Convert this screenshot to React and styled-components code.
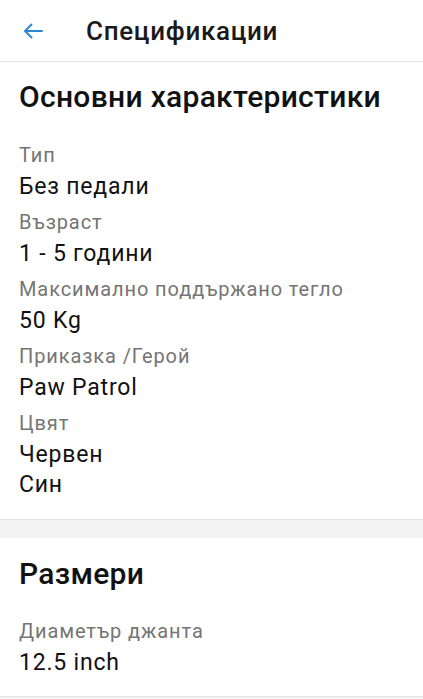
import React from "react";
import styled, { createGlobalStyle } from "styled-components";

const Global = createGlobalStyle`
  html, body { margin: 0; padding: 0; background: #fff; }
  body { font-family: Roboto, "Noto Sans", "Liberation Sans", sans-serif; color: #000; }
`;

const Page = styled.div`
  display: flex;
  flex-direction: column;
  width: 423px;
  height: 699px;
  overflow: hidden;
  background: #fff;
`;

const TopBar = styled.header`
  display: flex;
  align-items: center;
  height: 62px;
  flex-shrink: 0;
  border-bottom: 1px solid #e6e6e6;
  box-shadow: 0 1px 2px rgba(0, 0, 0, 0.04);
  box-sizing: border-box;
`;

const BackButton = styled.button`
  display: flex;
  align-items: center;
  justify-content: center;
  width: 66px;
  height: 100%;
  padding: 0;
  margin: 0 20px 0 0;
  border: none;
  background: none;
  color: #2b87d4;
`;

const Title = styled.h1`
  margin: 0;
  font-size: 26px;
  font-weight: 500;
  letter-spacing: 0.7px;
  line-height: 30px;
  color: #1a1a1a;
`;

const Section = styled.section`
  display: flex;
  flex-direction: column;
  padding: ${(p) => p.$top}px 19px ${(p) => p.$bottom}px;
`;

const Heading = styled.h2`
  margin: 0 0 ${(p) => p.$gap}px;
  font-size: 30px;
  font-weight: 500;
  letter-spacing: 0.3px;
  line-height: 36px;
  color: #111;
`;

const List = styled.dl`
  display: flex;
  flex-direction: column;
  gap: 6px;
  margin: 0;
`;

const Row = styled.div`
  display: flex;
  flex-direction: column;
  gap: 3px;
`;

const Label = styled.dt`
  font-size: 20px;
  letter-spacing: 0.9px;
  line-height: 28px;
  color: #757575;
`;

const Value = styled.dd`
  margin: 0;
  font-size: 23px;
  letter-spacing: 0.8px;
  line-height: 30px;
  color: #111;
`;

const Divider = styled.div`
  height: 18px;
  flex-shrink: 0;
  background: #f4f4f4;
  border-top: 1px solid #e3e3e3;
`;

const BackArrow = () => (
  <svg width="20" height="16" viewBox="0 0 20 16" fill="none">
    <path
      d="M19 8H2M8.5 1.5L2 8l6.5 6.5"
      stroke="currentColor"
      strokeWidth="2"
      strokeLinecap="round"
      strokeLinejoin="round"
    />
  </svg>
);

const basic = [
  { label: "Тип", values: ["Без педали"] },
  { label: "Възраст", values: ["1 - 5 години"] },
  { label: "Максимално поддържано тегло", values: ["50 Kg"] },
  { label: "Приказка /Герой", values: ["Paw Patrol"] },
  { label: "Цвят", values: ["Червен", "Син"] },
];

const sizes = [{ label: "Диаметър джанта", values: ["12.5 inch"] }];

const Specs = ({ items }) => (
  <List>
    {items.map((it) => (
      <Row key={it.label}>
        <Label>{it.label}</Label>
        <Value>
          {it.values.map((v) => (
            <div key={v}>{v}</div>
          ))}
        </Value>
      </Row>
    ))}
  </List>
);

export default function App() {
  return (
    <Page>
      <Global />
      <TopBar>
        <BackButton aria-label="Назад">
          <BackArrow />
        </BackButton>
        <Title>Спецификации</Title>
      </TopBar>
      <Section $top={17} $bottom={19}>
        <Heading $gap={26}>Основни характеристики</Heading>
        <Specs items={basic} />
      </Section>
      <Divider />
      <Section $top={18} $bottom={18}>
        <Heading $gap={25}>Размери</Heading>
        <Specs items={sizes} />
      </Section>
      <Divider />
    </Page>
  );
}
